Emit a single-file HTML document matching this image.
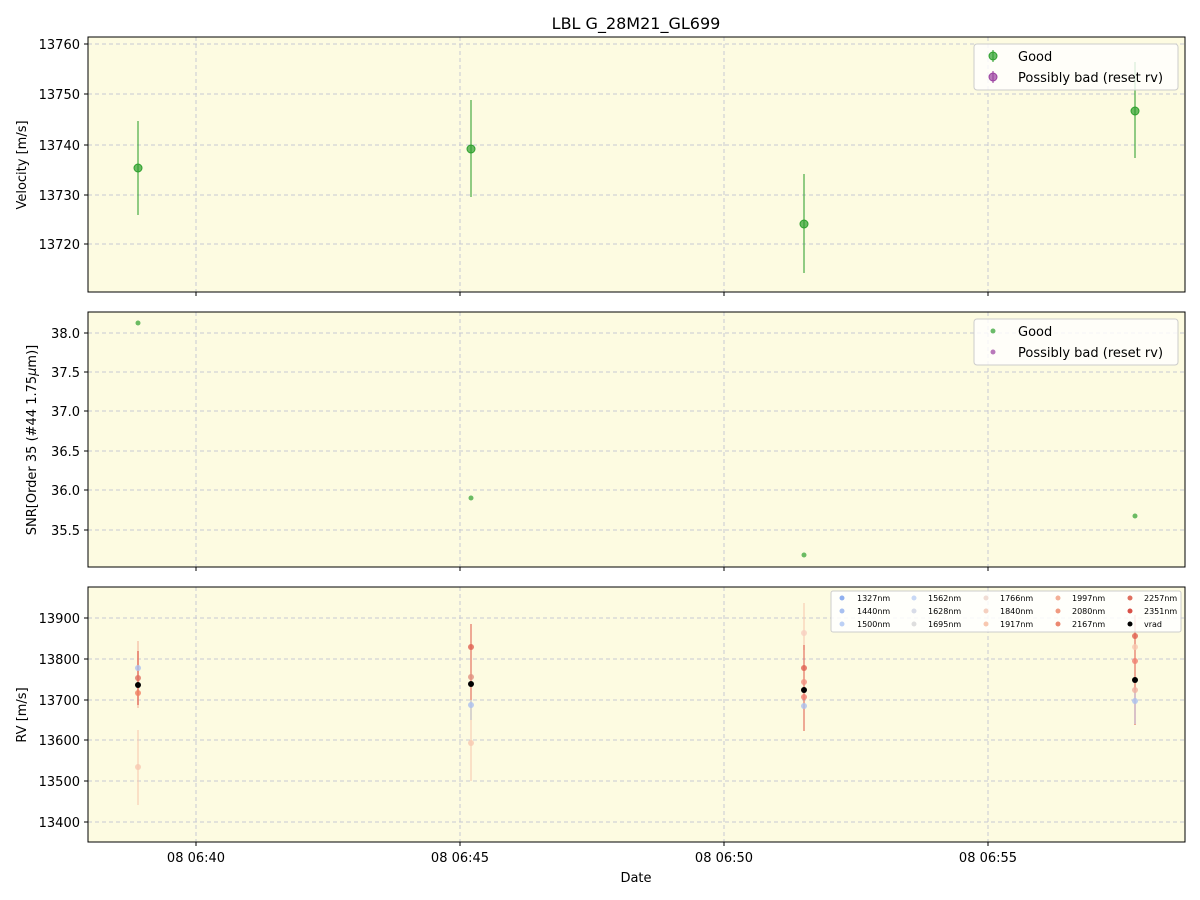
<!DOCTYPE html>
<html><head><style>body{margin:0;background:#fff}svg{display:block;font-family:"DejaVu Sans","Liberation Sans",sans-serif}</style></head><body>
<svg width="1200" height="900" viewBox="0 0 1200 900">
<defs>
<g id="vg" stroke="#c8c8d4" stroke-dasharray="4,3" stroke-width="1">
<line x1="196" y1="0" x2="196" y2="255"/><line x1="460" y1="0" x2="460" y2="255"/><line x1="724" y1="0" x2="724" y2="255"/><line x1="988" y1="0" x2="988" y2="255"/></g>
</defs>
<text x="636" y="29" font-size="16" text-anchor="middle" fill="#000">LBL G_28M21_GL699</text>

<!-- Panel 1 -->
<rect x="88" y="37" width="1097" height="255" fill="#fdfbe1"/>
<g transform="translate(0,37)"><use href="#vg"/></g>
<g stroke="#c8c8d4" stroke-dasharray="4,3"><line x1="88" x2="1185" y1="44" y2="44"/><line x1="88" x2="1185" y1="94" y2="94"/><line x1="88" x2="1185" y1="145" y2="145"/><line x1="88" x2="1185" y1="195" y2="195"/><line x1="88" x2="1185" y1="244" y2="244"/></g>
<g stroke="#2ca02c" stroke-opacity="0.7" stroke-width="1.5"><line x1="138" x2="138" y1="121" y2="215"/><line x1="471" x2="471" y1="100" y2="197"/><line x1="804" x2="804" y1="174" y2="273"/><line x1="1135" x2="1135" y1="62" y2="158"/></g>
<g fill="#2ca02c" fill-opacity="0.7" stroke="#2ca02c"><circle cx="138" cy="168" r="4"/><circle cx="471" cy="149" r="4"/><circle cx="804" cy="224" r="4"/><circle cx="1135" cy="111" r="4"/></g>
<rect x="88" y="37" width="1097" height="255" fill="none" stroke="#000"/>
<g font-size="13" text-anchor="end"><text x="80" y="49">13760</text><text x="80" y="99">13750</text><text x="80" y="150">13740</text><text x="80" y="200">13730</text><text x="80" y="249">13720</text></g>
<g stroke="#000"><line x1="84" x2="88" y1="44" y2="44"/><line x1="84" x2="88" y1="94" y2="94"/><line x1="84" x2="88" y1="145" y2="145"/><line x1="84" x2="88" y1="195" y2="195"/><line x1="84" x2="88" y1="244" y2="244"/><line x1="196" x2="196" y1="292" y2="296"/><line x1="460" x2="460" y1="292" y2="296"/><line x1="724" x2="724" y1="292" y2="296"/><line x1="988" x2="988" y1="292" y2="296"/></g>
<text transform="translate(26,165) rotate(-90)" font-size="13" text-anchor="middle">Velocity [m/s]</text>
<rect x="974" y="44" width="204" height="46" rx="3" fill="#fff" fill-opacity="0.8" stroke="#ccc"/>
<line x1="993" x2="993" y1="50" y2="62" stroke="#2ca02c" stroke-opacity="0.7" stroke-width="1.5"/><circle cx="993" cy="56" r="4" fill="#2ca02c" fill-opacity="0.7" stroke="#2ca02c"/>
<line x1="993" x2="993" y1="71" y2="83" stroke="#9a3fa0" stroke-opacity="0.7" stroke-width="1.5"/><circle cx="993" cy="77" r="4" fill="#9a3fa0" fill-opacity="0.7" stroke="#9a3fa0"/>
<text x="1018" y="61" font-size="13">Good</text><text x="1018" y="82" font-size="13">Possibly bad (reset rv)</text>

<!-- Panel 2 -->
<rect x="88" y="312" width="1097" height="255" fill="#fdfbe1"/>
<g transform="translate(0,312)"><use href="#vg"/></g>
<g stroke="#c8c8d4" stroke-dasharray="4,3"><line x1="88" x2="1185" y1="333" y2="333"/><line x1="88" x2="1185" y1="372" y2="372"/><line x1="88" x2="1185" y1="411" y2="411"/><line x1="88" x2="1185" y1="451" y2="451"/><line x1="88" x2="1185" y1="490" y2="490"/><line x1="88" x2="1185" y1="530" y2="530"/></g>
<g fill="#2ca02c" fill-opacity="0.7"><circle cx="138" cy="323" r="2.5"/><circle cx="471" cy="498" r="2.5"/><circle cx="804" cy="555" r="2.5"/><circle cx="1135" cy="516" r="2.5"/></g>
<rect x="88" y="312" width="1097" height="255" fill="none" stroke="#000"/>
<g font-size="13" text-anchor="end"><text x="80" y="338">38.0</text><text x="80" y="377">37.5</text><text x="80" y="416">37.0</text><text x="80" y="456">36.5</text><text x="80" y="495">36.0</text><text x="80" y="535">35.5</text></g>
<g stroke="#000"><line x1="84" x2="88" y1="333" y2="333"/><line x1="84" x2="88" y1="372" y2="372"/><line x1="84" x2="88" y1="411" y2="411"/><line x1="84" x2="88" y1="451" y2="451"/><line x1="84" x2="88" y1="490" y2="490"/><line x1="84" x2="88" y1="530" y2="530"/><line x1="196" x2="196" y1="567" y2="571"/><line x1="460" x2="460" y1="567" y2="571"/><line x1="724" x2="724" y1="567" y2="571"/><line x1="988" x2="988" y1="567" y2="571"/></g>
<text transform="translate(36,440) rotate(-90)" font-size="13" text-anchor="middle">SNR[Order 35 (#44 1.75<tspan font-style="italic">μ</tspan>m)]</text>
<rect x="974" y="319" width="204" height="46" rx="3" fill="#fff" fill-opacity="0.8" stroke="#ccc"/>
<circle cx="993" cy="331" r="2.5" fill="#2ca02c" fill-opacity="0.7"/><circle cx="993" cy="352" r="2.5" fill="#9a3fa0" fill-opacity="0.7"/>
<text x="1018" y="336" font-size="13">Good</text><text x="1018" y="357" font-size="13">Possibly bad (reset rv)</text>

<!-- Panel 3 -->
<rect x="88" y="587" width="1097" height="255" fill="#fdfbe1"/>
<g transform="translate(0,587)"><use href="#vg"/></g>
<g stroke="#c8c8d4" stroke-dasharray="4,3"><line x1="88" x2="1185" y1="618" y2="618"/><line x1="88" x2="1185" y1="659" y2="659"/><line x1="88" x2="1185" y1="700" y2="700"/><line x1="88" x2="1185" y1="740" y2="740"/><line x1="88" x2="1185" y1="781" y2="781"/><line x1="88" x2="1185" y1="822" y2="822"/></g>
<g stroke-width="1.5">
<line x1="138" x2="138" y1="641" y2="708" stroke="#f7c7ae"/><line x1="138" x2="138" y1="651" y2="705" stroke="#e06050" stroke-opacity="0.8"/>
<line x1="138" x2="138" y1="730" y2="805" stroke="#f7c7ae" stroke-opacity="0.7"/>
<line x1="471" x2="471" y1="624" y2="700" stroke="#e06050" stroke-opacity="0.7"/><line x1="471" x2="471" y1="700" y2="781" stroke="#f7c7ae" stroke-opacity="0.7"/><line x1="471" x2="471" y1="700" y2="720" stroke="#ccc"/>
<line x1="804" x2="804" y1="603" y2="650" stroke="#f7c7ae" stroke-opacity="0.7"/><line x1="804" x2="804" y1="645" y2="731" stroke="#e06050" stroke-opacity="0.7"/>
<line x1="1135" x2="1135" y1="615" y2="725" stroke="#e06050" stroke-opacity="0.7"/><line x1="1135" x2="1135" y1="690" y2="724" stroke="#d0c0d0"/>
</g>
<g fill-opacity="0.8">
<circle cx="138" cy="668" r="3" fill="#aac0f0"/><circle cx="138" cy="678" r="3" fill="#e07060"/><circle cx="138" cy="693" r="3" fill="#f08060"/><circle cx="138" cy="767" r="3" fill="#f8c8b0"/>
<circle cx="471" cy="647" r="3" fill="#e06050"/><circle cx="471" cy="677" r="3" fill="#e09080"/><circle cx="471" cy="705" r="3" fill="#aac0f0"/><circle cx="471" cy="743" r="3" fill="#f8c8b0"/>
<circle cx="804" cy="633" r="3" fill="#f8d0c0"/><circle cx="804" cy="668" r="3" fill="#e06050"/><circle cx="804" cy="682" r="3" fill="#f09080"/><circle cx="804" cy="697" r="3" fill="#f08070"/><circle cx="804" cy="706" r="3" fill="#aac0f0"/>
<circle cx="1135" cy="636" r="3" fill="#e06050"/><circle cx="1135" cy="647" r="3" fill="#f8c8b0"/><circle cx="1135" cy="661" r="3" fill="#f08070"/><circle cx="1135" cy="690" r="3" fill="#f0b0a0"/><circle cx="1135" cy="701" r="3" fill="#aac0f0"/>
</g>
<g fill="#000"><circle cx="138" cy="685" r="3"/><circle cx="471" cy="684" r="3"/><circle cx="804" cy="690" r="3"/><circle cx="1135" cy="680" r="3"/></g>
<rect x="88" y="587" width="1097" height="255" fill="none" stroke="#000"/>
<g font-size="13" text-anchor="end"><text x="80" y="623">13900</text><text x="80" y="664">13800</text><text x="80" y="705">13700</text><text x="80" y="745">13600</text><text x="80" y="786">13500</text><text x="80" y="827">13400</text></g>
<g stroke="#000"><line x1="84" x2="88" y1="618" y2="618"/><line x1="84" x2="88" y1="659" y2="659"/><line x1="84" x2="88" y1="700" y2="700"/><line x1="84" x2="88" y1="740" y2="740"/><line x1="84" x2="88" y1="781" y2="781"/><line x1="84" x2="88" y1="822" y2="822"/><line x1="196" x2="196" y1="842" y2="846"/><line x1="460" x2="460" y1="842" y2="846"/><line x1="724" x2="724" y1="842" y2="846"/><line x1="988" x2="988" y1="842" y2="846"/></g>
<text transform="translate(26,715) rotate(-90)" font-size="13" text-anchor="middle">RV [m/s]</text>
<g font-size="13" text-anchor="middle"><text x="196" y="862">08 06:40</text><text x="460" y="862">08 06:45</text><text x="724" y="862">08 06:50</text><text x="988" y="862">08 06:55</text><text x="636" y="882">Date</text></g>
<rect x="831" y="591" width="350" height="41" rx="2" fill="#fff" fill-opacity="0.85" stroke="#ccc"/>
<g font-size="8">
<circle cx="842" cy="598" r="2.5" fill="#90b0f0"/><text x="857" y="601">1327nm</text>
<circle cx="842" cy="611" r="2.5" fill="#a8c0f0"/><text x="857" y="614">1440nm</text>
<circle cx="842" cy="624" r="2.5" fill="#bcd0f5"/><text x="857" y="627">1500nm</text>
<circle cx="914" cy="598" r="2.5" fill="#c8d8f5"/><text x="928" y="601">1562nm</text>
<circle cx="914" cy="611" r="2.5" fill="#d8dce8"/><text x="928" y="614">1628nm</text>
<circle cx="914" cy="624" r="2.5" fill="#dedede"/><text x="928" y="627">1695nm</text>
<circle cx="986" cy="598" r="2.5" fill="#f0dcd4"/><text x="1000" y="601">1766nm</text>
<circle cx="986" cy="611" r="2.5" fill="#f5d0c0"/><text x="1000" y="614">1840nm</text>
<circle cx="986" cy="624" r="2.5" fill="#f8c8b0"/><text x="1000" y="627">1917nm</text>
<circle cx="1058" cy="598" r="2.5" fill="#f4b098"/><text x="1072" y="601">1997nm</text>
<circle cx="1058" cy="611" r="2.5" fill="#f09a80"/><text x="1072" y="614">2080nm</text>
<circle cx="1058" cy="624" r="2.5" fill="#ec8870"/><text x="1072" y="627">2167nm</text>
<circle cx="1130" cy="598" r="2.5" fill="#e07060"/><text x="1144" y="601">2257nm</text>
<circle cx="1130" cy="611" r="2.5" fill="#d85048"/><text x="1144" y="614">2351nm</text>
<circle cx="1130" cy="624" r="2.5" fill="#000"/><text x="1144" y="627">vrad</text>
</g>
</svg>
</body></html>
